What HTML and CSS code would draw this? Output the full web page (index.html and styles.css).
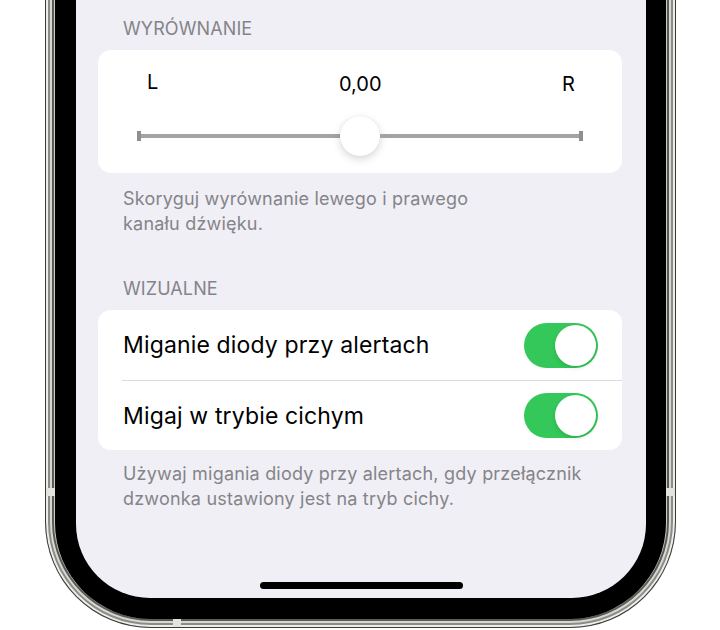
FILE: index.html
```html
<!DOCTYPE html>
<html lang="pl">
<head>
    <meta charset="UTF-8">
    <title>Ustawienia – Audio i wizualne</title>
    <meta name="viewport" content="width=device-width, initial-scale=1.0">
    <link rel="stylesheet" href="styles.css">
</head>
<body>
    <div class="phone">
        <span class="band band-left"></span>
        <span class="band band-right"></span>
        <span class="band band-bottom"></span>
        <div class="bezel">
            <div class="screen">
                <div class="section-title">Wyrównanie</div>
                <div class="card balance">
                    <div class="balance-labels">
                        <span class="side side-left">L</span>
                        <span class="value">0,00</span>
                        <span class="side side-right">R</span>
                    </div>
                    <div class="slider">
                        <span class="cap"></span>
                        <span class="track"></span>
                        <span class="thumb"></span>
                        <span class="track"></span>
                        <span class="cap"></span>
                    </div>
                </div>
                <p class="section-footer first">Skoryguj wyrównanie lewego i prawego<br>kanału dźwięku.</p>

                <div class="section-title">Wizualne</div>
                <div class="card">
                    <div class="row">
                        <span class="row-label">Miganie diody przy alertach</span>
                        <span class="toggle on"><span class="knob"></span></span>
                    </div>
                    <div class="row">
                        <span class="row-label">Migaj w trybie cichym</span>
                        <span class="toggle on"><span class="knob"></span></span>
                    </div>
                </div>
                <p class="section-footer second">Używaj migania diody przy alertach, gdy przełącznik<br>dzwonka ustawiony jest na tryb cichy.</p>

                <div class="home-indicator"></div>
            </div>
        </div>
    </div>
</body>
</html>
```

FILE: styles.css
```css
:root {
    --screen-bg: #f0eff5;
    --secondary: #848489;
    --green: #34c759;
    --separator: #dcdce0;
}

body {
    margin: 0;
    background: #fff;
    font-family: Inter, "Noto Sans", sans-serif;
    color: #000;
    overflow: hidden;
}

/* rama telefonu */
.phone {
    position: relative;
    width: 611px;
    height: 659px;
    margin: -40px 0 0 45px;
    padding: 0 9px 8px 9px;
    border: 1px solid #3b3b39;
    border-top: none;
    border-radius: 0 0 106px 106px;
    background: #cfcfca;
    box-shadow: inset 0 0 0 2px #ededea, inset 0 0 0 4px #8c8c87, inset 0 0 0 6px #d8d8d3, inset 0 0 0 8px #5a5a57;
    box-sizing: content-box;
}

.band {
    position: absolute;
    background: #e4e4de;
}

.band-left {
    left: 0;
    top: 528px;
    width: 9px;
    height: 8px;
}

.band-right {
    right: 0;
    top: 528px;
    width: 9px;
    height: 8px;
}

.band-bottom {
    left: 127px;
    bottom: 0;
    width: 8px;
    height: 8px;
}

.bezel {
    height: 638px;
    padding: 0 20px 21px 21px;
    background: #000;
    border-radius: 0 0 96px 96px;
}

.screen {
    display: flex;
    flex-direction: column;
    height: 638px;
    padding-top: 40px;
    box-sizing: border-box;
    background: var(--screen-bg);
    border-radius: 0 0 74px 74px;
    overflow: hidden;
}

.section-title {
    margin: 18px 0 10px 47px;
    font-size: 18px;
    line-height: 22px;
    letter-spacing: 0.1px;
    color: var(--secondary);
    text-transform: uppercase;
}

.card {
    margin: 0 24px 0 22px;
    background: #fff;
    border-radius: 13px;
}

/* wyrównanie */
.balance {
    padding: 22px 39px 17px;
}

.balance-labels {
    display: flex;
    justify-content: space-between;
    align-items: baseline;
    font-size: 20px;
    line-height: 24px;
}

.side-left {
    margin-left: 10px;
    position: relative;
    top: -2px;
}

.side-right {
    margin-right: 8px;
}

.slider {
    display: flex;
    align-items: center;
    height: 40px;
    margin-top: 20px;
}

.cap {
    width: 4px;
    height: 10px;
    background: #8f8f8f;
}

.track {
    flex: 1;
    height: 4px;
    background: #a3a3a3;
}

.thumb {
    width: 40px;
    height: 40px;
    border-radius: 50%;
    background: #fff;
    box-shadow: 0 3px 8px rgba(0, 0, 0, 0.16), 0 0 1px rgba(0, 0, 0, 0.12);
}

.section-footer {
    margin: 0 0 0 47px;
    font-size: 18px;
    line-height: 25px;
    letter-spacing: 0.2px;
    color: var(--secondary);
}

.section-footer.first {
    margin-top: 13px;
    margin-bottom: 24px;
}

.section-footer.second {
    margin-top: 11px;
}

/* wiersze z przełącznikami */
.row {
    display: flex;
    align-items: center;
    justify-content: space-between;
    height: 70px;
    padding: 0 24px 0 25px;
}

.row + .row {
    height: 69px;
    border-top: 1px solid var(--separator);
    margin-left: 24px;
    padding-left: 1px;
}

.row-label {
    font-size: 23px;
    letter-spacing: 0.15px;
}

.toggle {
    display: flex;
    justify-content: flex-end;
    align-items: center;
    width: 74px;
    height: 45px;
    padding: 0 2px;
    box-sizing: border-box;
    border-radius: 23px;
    background: var(--green);
}

.knob {
    width: 41px;
    height: 41px;
    border-radius: 50%;
    background: #fff;
    box-shadow: 0 2px 4px rgba(0, 0, 0, 0.12);
}

.home-indicator {
    width: 203px;
    height: 7px;
    margin: auto auto 9px;
    border-radius: 4px;
    background: #000;
}
```
